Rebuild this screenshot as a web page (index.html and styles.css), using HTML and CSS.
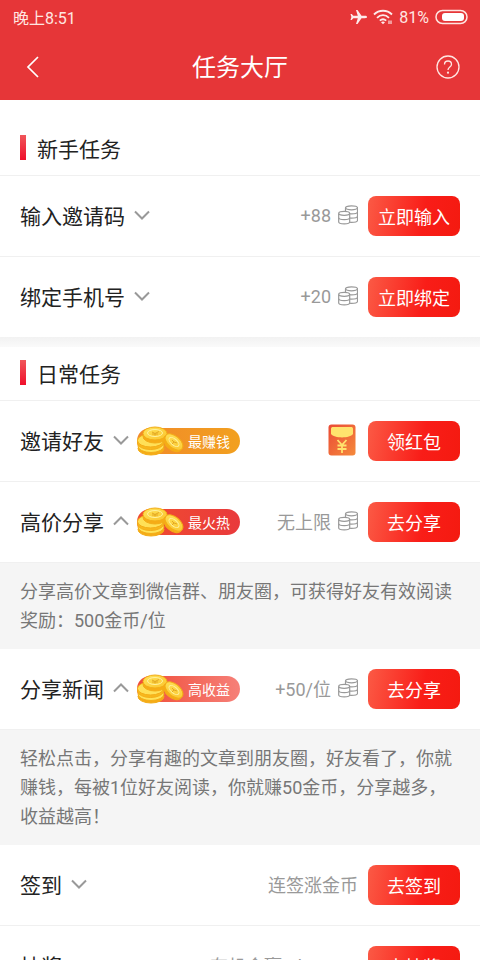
FILE: index.html
```html
<!DOCTYPE html>
<html lang="zh-CN">
<head>
<meta charset="utf-8">
<meta name="viewport" content="width=device-width, initial-scale=1">
<title>任务大厅</title>
<link rel="stylesheet" href="styles.css">
</head>
<body>
<svg class="defs" aria-hidden="true">
  <defs>
    <linearGradient id="gold" x1="0" y1="0" x2="1" y2="1"><stop offset="0" stop-color="#ffe45c"/><stop offset="1" stop-color="#fbc42c"/></linearGradient>
    <linearGradient id="packet" x1="0" y1="0" x2="1" y2="1"><stop offset="0" stop-color="#ea4a35"/><stop offset="1" stop-color="#f58a3c"/></linearGradient>
  </defs>
  <symbol id="down" viewBox="0 0 18 10"><path d="M2 1.500l7 7 7-7" fill="none" stroke="#999" stroke-width="2"/></symbol>
  <symbol id="up" viewBox="0 0 18 10"><path d="M2 8.500l7-7 7 7" fill="none" stroke="#999" stroke-width="2"/></symbol>
  <symbol id="coins" viewBox="0 0 20 20">
    <g fill="#fff" stroke="#999" stroke-width="1.200">
      <path d="M7.500 3v12.500c0 2.500 12 2.500 12 0V3"/>
      <path d="M7.500 7c0 2.500 12 2.500 12 0M7.500 11.200c0 2.500 12 2.500 12 0" fill="none"/>
      <ellipse cx="13.500" cy="2.800" rx="6" ry="2"/>
      <path d="M.700 8.500v8.500c0 2.500 11 2.500 11 0V8.500"/>
      <path d="M.700 12.700c0 2.500 11 2.500 11 0" fill="none"/>
      <ellipse cx="6.200" cy="8.300" rx="5.500" ry="2"/>
    </g>
  </symbol>
  <symbol id="gold-coins" viewBox="0 0 48 30">
    <g stroke="#f3ad18" stroke-width="1">
      <ellipse cx="14" cy="22.500" rx="13" ry="6.500" fill="#f6ac16"/>
      <ellipse cx="14" cy="20" rx="13" ry="6.500" fill="#ffe258"/>
      <ellipse cx="13.500" cy="17" rx="13" ry="6.500" fill="#f9b81c"/>
      <ellipse cx="13.500" cy="14.500" rx="13" ry="6.500" fill="#ffe057"/>
      <ellipse cx="18" cy="10.500" rx="12" ry="6.500" fill="#f6ac16"/>
      <ellipse cx="18" cy="7.500" rx="12" ry="6.500" fill="url(#gold)"/>
      <ellipse cx="35.500" cy="17.500" rx="10.500" ry="6" transform="rotate(40 35.500 17.500)" fill="#f6ac16"/>
      <ellipse cx="37" cy="16" rx="10.500" ry="6" transform="rotate(40 37 16)" fill="url(#gold)"/>
    </g>
    <g fill="none" stroke="#e3a824" stroke-width="1">
      <ellipse cx="18" cy="7" rx="7.500" ry="3.500" stroke="#fff2a0"/>
      <path d="M15 6l3 1.500 4-2M18 7.500v2M15 8h6"/>
      <ellipse cx="37" cy="16" rx="6" ry="3" transform="rotate(40 37 16)" stroke="#fff2a0"/>
      <path d="M35 14l2 2 3 1M37 16l-2 2"/>
    </g>
  </symbol>
</svg>

<header class="top">
  <div class="status">
    <span>晚上8:51</span>
    <span class="indicators">
      <svg width="17" height="16" viewBox="0 0 17 16" aria-hidden="true"><path d="M17 8c0-.8-.8-1.200-2-1.200h-3.500L7.500 1H6l1.800 5.800H3.300L1.800 5H.5l.9 3-.9 3h1.300l1.500-1.800h4.500L6 15h1.500l4-5.800H15c1.200 0 2-.4 2-1.200z" fill="#fff" fill-opacity=".9"/></svg>
      <svg width="20" height="16" viewBox="0 0 20 16" aria-hidden="true"><g fill="none" stroke="#fff" stroke-opacity=".9" stroke-width="1.800"><path d="M1 5.500c5-5 13-5 18 0M4 8.800c3.500-3.500 8.500-3.500 12 0M6.800 11.700c2-1.800 4.400-1.800 6.400 0"/></g><path d="M8 13.200c1.200-1 2.800-1 4 0L10 15.300z" fill="#fff" fill-opacity=".9"/><path d="M15 11.500h4v3.500h-4z" fill="#fff" fill-opacity=".5"/></svg>
      <span>81%</span>
      <svg width="33" height="16" viewBox="0 0 33 16" aria-hidden="true"><rect x="1" y="1.500" width="31" height="13" rx="6.500" fill="none" stroke="#ffe4e0" stroke-width="1.500"/><rect x="7" y="4" width="22" height="8" rx="3" fill="#fff"/></svg>
    </span>
  </div>
  <div class="nav">
    <button class="icon-button" aria-label="返回"><svg width="14" height="24" viewBox="0 0 14 24"><path d="M13 2L3 12l10 10" fill="none" stroke="#fff" stroke-width="1.700"/></svg></button>
    <h1>任务大厅</h1>
    <button class="icon-button" aria-label="帮助"><svg width="24" height="24" viewBox="0 0 24 24"><g fill="none" stroke="#ffe6e2" stroke-width="1.300"><circle cx="12" cy="12" r="11"/><path d="M8.500 9.500c0-4.700 7-4.700 7 0 0 2.500-3.500 2.700-3.500 5.500"/></g><circle cx="12" cy="17.700" r="1.100" fill="#ffe6e2"/></svg></button>
  </div>
</header>

<main>
  <section class="group first">
    <h2>新手任务</h2>
    <div class="row">
      <button class="toggle">输入邀请码<svg class="chevron"><use href="#down"/></svg></button>
      <span class="reward">+88<svg class="coins"><use href="#coins"/></svg></span>
      <button class="action">立即输入</button>
    </div>
    <div class="row">
      <button class="toggle">绑定手机号<svg class="chevron"><use href="#down"/></svg></button>
      <span class="reward">+20<svg class="coins"><use href="#coins"/></svg></span>
      <button class="action">立即绑定</button>
    </div>
  </section>

  <section class="group daily">
    <h2>日常任务</h2>
    <div class="row">
      <button class="toggle">邀请好友<svg class="chevron"><use href="#down"/></svg></button>
      <span class="badge orange"><svg class="gold"><use href="#gold-coins"/></svg>最赚钱</span>
      <span class="reward"><svg class="packet" viewBox="0 0 28 32" role="img" aria-label="红包"><rect x=".5" y=".5" width="27" height="31" rx="3" fill="url(#packet)"/><path d="M3 5c0-1.500.8-2 2-2h18c1.200 0 2 .5 2 2v5c-3 4.500-19 4.500-22 0z" fill="#ffe36d"/><path d="M9.500 16l4.500 5 4.500-5M14 21v8M9.500 21.500h9M9.500 25h9" fill="none" stroke="#ffe36d" stroke-width="1.800"/></svg></span>
      <button class="action">领红包</button>
    </div>
    <div class="row">
      <button class="toggle" aria-expanded="true">高价分享<svg class="chevron"><use href="#up"/></svg></button>
      <span class="badge red"><svg class="gold"><use href="#gold-coins"/></svg>最火热</span>
      <span class="reward">无上限<svg class="coins"><use href="#coins"/></svg></span>
      <button class="action">去分享</button>
    </div>
    <p class="detail">分享高价文章到微信群、朋友圈，可获得好友有效阅读奖励：500金币/位</p>
    <div class="row">
      <button class="toggle" aria-expanded="true">分享新闻<svg class="chevron"><use href="#up"/></svg></button>
      <span class="badge coral"><svg class="gold"><use href="#gold-coins"/></svg>高收益</span>
      <span class="reward">+50/位<svg class="coins"><use href="#coins"/></svg></span>
      <button class="action">去分享</button>
    </div>
    <p class="detail">轻松点击，分享有趣的文章到朋友圈，好友看了，你就赚钱，每被1位好友阅读，你就赚50金币，分享越多，收益越高！</p>
    <div class="row">
      <button class="toggle">签到<svg class="chevron"><use href="#down"/></svg></button>
      <span class="reward">连签涨金币</span>
      <button class="action">去签到</button>
    </div>
    <div class="row">
      <button class="toggle">抽奖<svg class="chevron"><use href="#down"/></svg></button>
      <span class="reward">有机会赢iPhone XI</span>
      <button class="action">去抽奖</button>
    </div>
  </section>
</main>
</body>
</html>
```
FILE: styles.css
```css
* { box-sizing: border-box; }

html { height: 100%; overflow: hidden; }

body {
  margin: 0;
  height: 100%;
  overflow: hidden;
  background: #fff;
  color: #222;
  font-family: Roboto, "Noto Sans CJK SC", sans-serif;
}

button {
  margin: 0;
  padding: 0;
  border: 0;
  background: none;
  color: inherit;
  font: inherit;
}

svg { flex: none; }

.defs { position: absolute; width: 0; height: 0; }

.top {
  background: #e63638;
  color: #fff;
}

.status {
  display: flex;
  justify-content: space-between;
  align-items: center;
  height: 34px;
  padding: 0 12px 0 13px;
  font-size: 16px;
  color: #ffe6e2;
}

.indicators { display: flex; align-items: center; gap: 6px; }

.nav {
  display: grid;
  grid-template-columns: 48px 1fr 48px;
  align-items: center;
  height: 66px;
  padding: 0 8px;
}

.icon-button { display: flex; justify-content: center; }

h1 {
  margin: 0;
  padding-top: 2px;
  font-size: 24px;
  font-weight: 400;
  line-height: 34px;
  text-align: center;
}

.first { padding-top: 22px; }

.daily::before {
  content: "";
  display: block;
  height: 10px;
  background: linear-gradient(#f2f2f2, #fafafa);
}

h2 {
  display: flex;
  align-items: center;
  gap: 11px;
  height: 54px;
  margin: 0;
  padding: 0 20px 2px;
  border-bottom: 1px solid #f0f0f0;
  font-size: 21px;
  font-weight: 400;
}

h2::before {
  content: "";
  width: 6px;
  height: 25px;
  background: linear-gradient(#f0565a, #f0102c);
}

.row {
  display: flex;
  align-items: center;
  height: 81px;
  padding: 0 20px;
  border-bottom: 1px solid #f0f0f0;
}

.first .row:last-child { height: 80px; border-bottom: 0; }

.toggle {
  display: flex;
  align-items: center;
  gap: 8px;
  padding-bottom: 2px;
  font-size: 21px;
  white-space: nowrap;
}

.chevron { width: 18px; height: 10px; }

.badge {
  display: flex;
  align-items: center;
  height: 26px;
  margin-left: 7px;
  padding-right: 10px;
  border-radius: 13px;
  color: #fff;
  font-size: 14px;
}

.gold { width: 48px; height: 30px; margin-right: 3px; }

.orange { background: linear-gradient(90deg, #f18a2a, #f2a01f); }
.red { background: linear-gradient(90deg, #f04c30, #e93a3c); }
.coral { background: linear-gradient(90deg, #f04c38, #f68078); }

.reward {
  display: flex;
  align-items: center;
  gap: 7px;
  margin-left: auto;
  margin-right: 10px;
  padding-bottom: 2px;
  color: #999;
  font-size: 18px;
  white-space: nowrap;
}

.coins { width: 20px; height: 20px; }

.packet { width: 28px; height: 32px; margin-right: 2px; }

.action {
  flex: none;
  width: 92px;
  height: 40px;
  border-radius: 8px;
  background: linear-gradient(100deg, #fb5a45, #f91d18 60%, #f41a10);
  color: #fff;
  font-size: 18px;
}

.detail {
  margin: 0;
  padding: 14px 20px;
  background: #f5f5f5;
  color: #777;
  font-size: 18px;
  line-height: 29px;
}
```
